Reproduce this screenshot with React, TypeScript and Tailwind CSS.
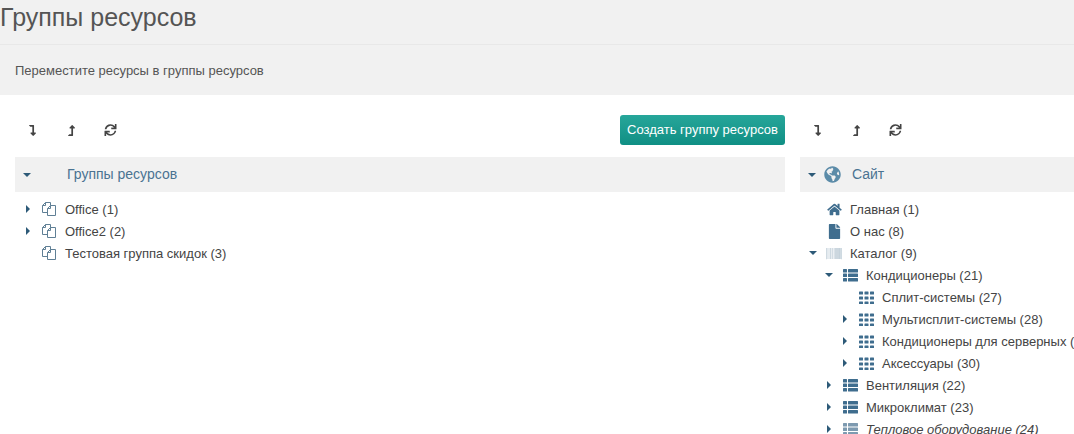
import { FaBarcode, FaFile, FaGlobeAmericas, FaHome, FaLevelDownAlt, FaLevelUpAlt, FaSync } from 'react-icons/fa';
import type { ReactNode } from 'react';

const BLUE = 'text-[#3f6d8e]';

function CopyIcon() {
    return (
        <svg viewBox="0 0 16 16" className="w-[16px] h-[16px] text-[#5f7f95]" fill="none" stroke="currentColor" strokeWidth="1">
            <path d="M9.5 4.5V1.5H4.5L1.5 4.5V11.5H6.5" />
            <path d="M4.5 1.5V4.5H1.5" />
            <path d="M14.5 4.5H9.5L6.5 7.5V14.5H14.5Z" />
            <path d="M9.5 4.5V7.5H6.5" />
        </svg>
    );
}

// font awesome 4 style th, cells have visible gaps
function ThIcon() {
    return (
        <svg viewBox="0 0 15 13" className="w-[15px] h-[13px]" fill="currentColor">
            {[0, 5, 10].map((y) =>
                [0, 5.5, 11].map((x) => <rect key={`${x}-${y}`} x={x} y={y + 0.5} width="4" height="3" rx="0.5" />),
            )}
        </svg>
    );
}

function ThListIcon({ className }: { className?: string }) {
    return (
        <svg viewBox="0 0 15 13" className={`w-[15px] h-[13px] ${className ?? ''}`} fill="currentColor">
            {[0, 4.5, 9].map((y) => (
                <g key={y}>
                    <rect x="0" y={y} width="4" height="3.5" rx="0.5" />
                    <rect x="5" y={y} width="10" height="3.5" rx="0.5" />
                </g>
            ))}
        </svg>
    );
}

function Caret({ open }: { open?: boolean }) {
    if (open) {
        return <span className="block w-0 h-0 border-x-[4px] border-x-transparent border-t-[4px] border-t-[#2d5a78]" />;
    }
    return <span className="block w-0 h-0 border-y-[4px] border-y-transparent border-l-[4px] border-l-[#2d5a78]" />;
}

function Row({ level, caret, icon, label, italic }: { level: number; caret?: 'open' | 'closed'; icon: ReactNode; label: string; italic?: boolean }) {
    const indent = ['pl-0', 'pl-[16px]', 'pl-[32px]'][level];
    return (
        <div className={`flex items-center h-[22px] ${indent}`}>
            <span className="flex items-center justify-center w-[25px] shrink-0">
                {caret && <Caret open={caret === 'open'} />}
            </span>
            <span className={`flex items-center justify-center w-[18px] shrink-0 ${BLUE}`}>{icon}</span>
            <span className={`ml-[7px] pt-[1px] whitespace-nowrap text-[#444] ${italic ? 'italic' : ''}`}>{label}</span>
        </div>
    );
}

function Toolbar() {
    return (
        <div className="flex items-center gap-[26px] pl-[11px] text-[#444]">
            <FaLevelDownAlt className="w-[13px] h-[11px]" />
            <FaLevelUpAlt className="w-[13px] h-[11px]" />
            <FaSync className="w-[13px] h-[12px]" />
        </div>
    );
}

export default function App() {
    return (
        <div className="h-[434px] w-[1074px] overflow-hidden bg-white text-[13px] font-['Liberation_Sans',Arial,sans-serif]">
            <div className="bg-[#f1f1f1]">
                <h1 className="h-[45px] border-b border-[#e8e8e8] text-[25px] leading-[34px] text-[#555]">Группы ресурсов</h1>
                <p className="h-[50px] pl-[15px] leading-[52px] text-[#555]">Переместите ресурсы в группы ресурсов</p>
            </div>
            <div className="flex gap-[15px] pl-[15px]">
                <div className="w-[770px] shrink-0">
                    <div className="flex items-center justify-between h-[62px] pt-[8px]">
                        <Toolbar />
                        <button className="h-[30px] w-[165px] rounded-[3px] bg-gradient-to-b from-[#26a69a] to-[#0f8f84] text-[13px] text-white">
                            Создать группу ресурсов
                        </button>
                    </div>
                    <div className="flex items-center h-[35px] bg-[#f1f1f1] pl-[8px] text-[14px] text-[#4a7391]">
                        <Caret open />
                        <span className="ml-[36px]">Группы ресурсов</span>
                    </div>
                    <div className="pt-[6px]">
                        <Row level={0} caret="closed" icon={<CopyIcon />} label="Office (1)" />
                        <Row level={0} caret="closed" icon={<CopyIcon />} label="Office2 (2)" />
                        <Row level={0} icon={<CopyIcon />} label="Тестовая группа скидок (3)" />
                    </div>
                </div>
                <div className="w-[400px] shrink-0">
                    <div className="flex items-center h-[62px] pt-[8px]">
                        <Toolbar />
                    </div>
                    <div className="flex items-center h-[35px] bg-[#f1f1f1] pl-[8px] text-[14px] text-[#4a7391]">
                        <Caret open />
                        <FaGlobeAmericas className="ml-[8px] w-[17px] h-[17px] text-[#5b8ba8]" />
                        <span className="ml-[11px]">Сайт</span>
                    </div>
                    <div className="pt-[6px]">
                        <Row level={0} icon={<FaHome className="w-[15px] h-[13px]" />} label="Главная (1)" />
                        <Row level={0} icon={<FaFile className="w-[13px] h-[15px]" />} label="О нас (8)" />
                        <Row level={0} caret="open" icon={<FaBarcode className="w-[16px] h-[15px] text-[#9fb4c3]" />} label="Каталог (9)" />
                        <Row level={1} caret="open" icon={<ThListIcon />} label="Кондиционеры (21)" />
                        <Row level={2} icon={<ThIcon />} label="Сплит-системы (27)" />
                        <Row level={2} caret="closed" icon={<ThIcon />} label="Мультисплит-системы (28)" />
                        <Row level={2} caret="closed" icon={<ThIcon />} label="Кондиционеры для серверных (29)" />
                        <Row level={2} caret="closed" icon={<ThIcon />} label="Аксессуары (30)" />
                        <Row level={1} caret="closed" icon={<ThListIcon />} label="Вентиляция (22)" />
                        <Row level={1} caret="closed" icon={<ThListIcon />} label="Микроклимат (23)" />
                        <Row level={1} caret="closed" icon={<ThListIcon className="text-[#7d9ab0]" />} label="Тепловое оборудование (24)" italic />
                    </div>
                </div>
            </div>
        </div>
    );
}
